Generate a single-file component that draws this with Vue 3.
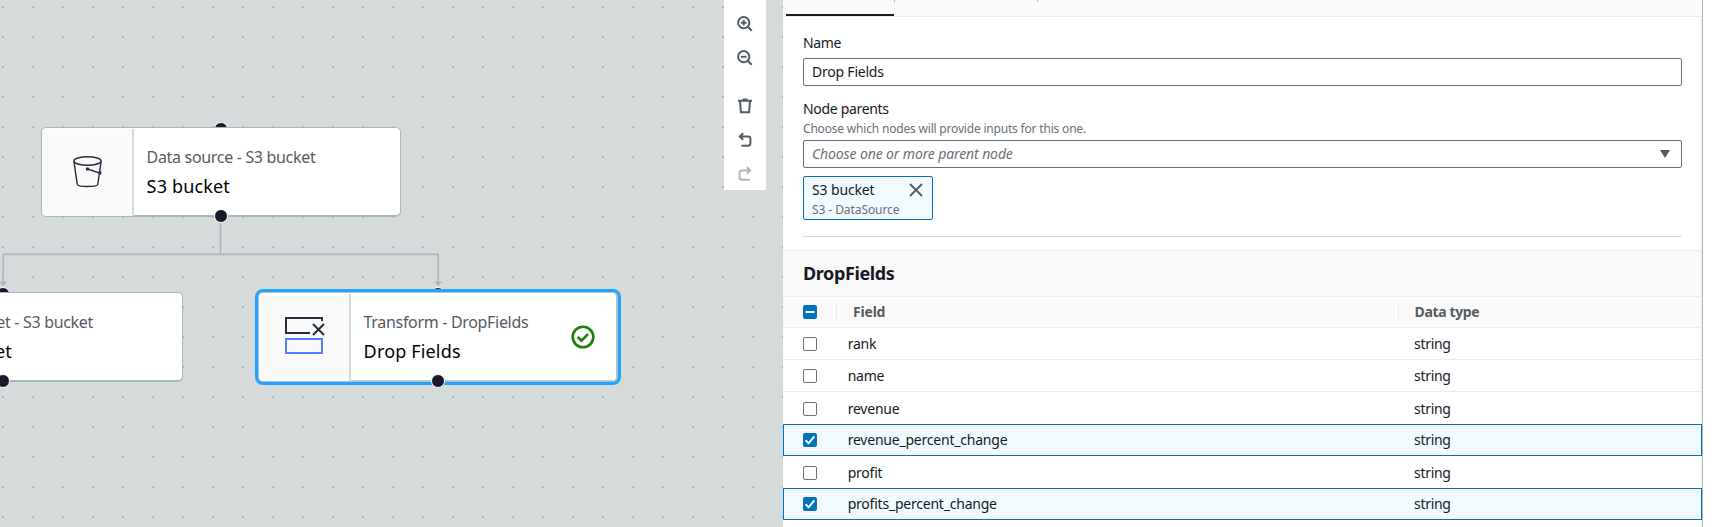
<script setup>
const nodes = [
  { id: 'source', kind: 'Data source - S3 bucket', title: 'S3 bucket', icon: 'bucket' },
  { id: 'target', kind: 'Data target - S3 bucket', title: 'S3 bucket', icon: 'bucket' },
  { id: 'drop', kind: 'Transform - DropFields', title: 'Drop Fields', icon: 'drop', selected: true },
]
const fields = [
  { name: 'rank', type: 'string' },
  { name: 'name', type: 'string' },
  { name: 'revenue', type: 'string', low: true },
  { name: 'revenue_percent_change', type: 'string', checked: true },
  { name: 'profit', type: 'string', low: true },
  { name: 'profits_percent_change', type: 'string', checked: true },
]
</script>

<template>
  <div class="app">
    <section class="canvas">
      <svg class="edges" width="783" height="527" fill="none" stroke="#b1b1b7" stroke-width="1.6">
        <path d="M220.5 215V254.4H3.2V283M220.5 254.4H438.2V283" />
        <path d="M-.6 281.5h7.6l-3.8 4.8zM434.4 281.5h7.6l-3.8 4.8z" fill="#b1b1b7" stroke="none" />
      </svg>

      <div v-for="n in nodes" :key="n.id" class="node-wrap" :class="n.id">
        <i class="handle top"></i>
        <div class="node" :class="{ selected: n.selected }">
          <div class="node-icon">
            <svg v-if="n.icon === 'bucket'" width="32" height="34" viewBox="0 0 32 34" fill="none" stroke="#232f3e" stroke-width="1.4">
              <ellipse cx="15.5" cy="6" rx="13.6" ry="4.2" />
              <path d="M1.9 6.2l3.3 23c.3 3 20.3 3 20.6 0l3.3-23" />
              <path d="M15.5 14l13.8 4.6M26.8 16.8l2.6.2M26.6 18.4l2.6.6" />
              <circle cx="15.5" cy="14" r="1" fill="#232f3e" />
            </svg>
            <svg v-else width="42" height="40" viewBox="0 0 42 40" fill="none" stroke-width="2">
              <path d="M38 5V2H2v15h24" stroke="#232f3e" />
              <path d="M29 8l11 11M40 8L29 19" stroke="#232f3e" />
              <path d="M2 23h36v14H2z" stroke="#527fff" />
            </svg>
          </div>
          <div class="node-text">
            <div class="kind">{{ n.kind }}</div>
            <div class="title">{{ n.title }}</div>
          </div>
          <svg v-if="n.selected" class="ok" width="24" height="24" viewBox="0 0 24 24" fill="none" stroke="#1d8102" stroke-width="2.6">
            <circle cx="12" cy="12" r="10.3" />
            <path d="M6.6 12l3.9 3.7 6.4-6.6" />
          </svg>
        </div>
        <i class="handle bottom"></i>
      </div>

      <div class="toolbar">
        <svg width="16" height="16" viewBox="0 0 16 16"><circle cx="6.7" cy="6.7" r="5.6" /><path d="M10.8 10.8l4 4M6.7 3.8v5.8M3.8 6.7h5.8" /></svg>
        <svg width="16" height="16" viewBox="0 0 16 16"><circle cx="6.7" cy="6.7" r="5.6" /><path d="M10.8 10.8l4 4M3.8 6.7h5.8" /></svg>
        <svg class="gap" width="16" height="16" viewBox="0 0 16 16"><path d="M1 2.7h14M5.5 1.6h5M3 3l.9 11.3h8.2L13 3" /></svg>
        <svg width="16" height="16" viewBox="0 0 16 16"><path d="M3 4.5h8a2.4 2.4 0 0 1 2.4 2.4v4.4a2.4 2.4 0 0 1-2.4 2.4H4.4M6.2 1.2L2.8 4.5l3.4 3.3" /></svg>
        <svg class="off" width="16" height="16" viewBox="0 0 16 16"><path d="M13 4.5H5a2.4 2.4 0 0 0-2.4 2.4v4.4A2.4 2.4 0 0 0 5 13.7h7.8M9.8 1.2l3.4 3.3-3.4 3.3" /></svg>
      </div>
    </section>

    <aside class="panel">
      <div class="tabs"><span class="tab active"></span><span class="tab second"></span></div>
      <form class="form" @submit.prevent>
        <label class="label">Name</label>
        <div class="field">Drop Fields</div>
        <label class="label parents">Node parents</label>
        <div class="hint">Choose which nodes will provide inputs for this one.</div>
        <div class="field select">
          <em>Choose one or more parent node</em>
          <svg width="10" height="8" viewBox="0 0 10 8"><path d="M0 0h10L5 8z" fill="#545b64" /></svg>
        </div>
        <div class="token">
          <div>
            <div class="token-name">S3 bucket</div>
            <div class="token-sub">S3 - DataSource</div>
          </div>
          <svg width="14" height="14" viewBox="0 0 14 14" stroke="#545b64" stroke-width="1.8"><path d="M1 1l12 12M13 1L1 13" /></svg>
        </div>
        <div class="rule"></div>
      </form>

      <h2 class="heading">DropFields</h2>
      <div class="row head">
        <span class="box on"><svg width="14" height="14" stroke="#fff" stroke-width="2"><path d="M2.5 7h9" /></svg></span>
        <span class="cell name">Field</span>
        <span class="cell type">Data type</span>
      </div>
      <div v-for="f in fields" :key="f.name" class="row" :class="{ checked: f.checked, low: f.low }">
        <span class="box" :class="{ on: f.checked }">
          <svg v-if="f.checked" width="14" height="14" fill="none" stroke="#fff" stroke-width="2"><path d="M2.5 7.3l3.1 3L11.3 3.4" /></svg>
        </span>
        <span class="cell name">{{ f.name }}</span>
        <span class="cell type">{{ f.type }}</span>
      </div>
    </aside>
  </div>
</template>

<style>
body { margin: 0; overflow: hidden; background: #fff; }
</style>

<style scoped>
.app {
  display: flex;
  width: 1716px;
  height: 527px;
  overflow: hidden;
  font: 14px/20px "Noto Sans", "Open Sans", sans-serif;
  letter-spacing: -0.22px;
  color: #16191f;
}
.app * { box-sizing: border-box; }

/* Graph canvas */
.canvas {
  position: relative;
  width: 783px;
  flex: none;
  overflow: hidden;
  background: #d5dbdb radial-gradient(circle at 3px 7px, #b0b7b9 0.9px, transparent 1.4px) 0 0 / 30px 30px;
}
.edges { position: absolute; left: 0; top: 0; }
.node-wrap { position: absolute; width: 360px; height: 90px; }
.source { left: 41px; top: 127px; }
.target { left: -177px; top: 292px; }
.drop { left: 258px; top: 292px; }
.node {
  position: relative;
  display: flex;
  height: 90px;
  background: #fff;
  border: 1px solid #aab7b8;
  border-radius: 5px;
  box-shadow: inset 0 -1px 0 #aab7b8;
}
.node.selected { box-shadow: 0 0 0 3px #24a4ff, inset 0 -1px 0 #c3cbcc; border-color: #b5bec0; border-right-width: 2px; }
.node-icon {
  display: flex;
  align-items: center;
  justify-content: center;
  width: 92px;
  flex: none;
  margin-top: 1px;
  background: #fafafa;
  border-right: 2px solid #d5dbdb;
  border-radius: 4px 0 0 4px;
}
.node-icon svg { margin: -2px 0 0 2px; }
.drop .node-icon svg { margin: -3px 0 0 1px; }
.node-text { padding: 17px 0 0 12.6px; white-space: nowrap; }
.kind { font-size: 16px; line-height: 24px; letter-spacing: -0.32px; color: #545b64; }
.title { margin-top: 5px; font-size: 18px; line-height: 24px; letter-spacing: 0.16px; color: #000; }
.ok { position: absolute; left: 311.5px; top: 32px; }
.handle {
  position: absolute;
  left: 172.5px;
  width: 14px;
  height: 14px;
  border: 1px solid #fff;
  border-radius: 50%;
  background: #1a192b;
}
.handle.top { top: -5.5px; }
.handle.bottom { bottom: -5.5px; }
.drop .handle, .target .handle { left: 173.3px; }

.toolbar {
  position: absolute;
  left: 724px;
  top: 0;
  display: flex;
  flex-direction: column;
  align-items: center;
  gap: 18px;
  width: 42px;
  height: 190px;
  padding-top: 16px;
  background: #fff;
}
.toolbar svg { flex: none; fill: none; stroke: #545b64; stroke-width: 2; }
.toolbar .gap { margin-top: 14px; }
.toolbar .off { stroke: #aab7b8; }

/* Properties panel */
.panel {
  width: 920px;
  flex: none;
  background: #fff;
  border-right: 1px solid #aab7b8;
  box-shadow: inset -1px 0 0 #eaeded;
}
.tabs { display: flex; height: 17px; padding-left: 3px; background: #fafafa; border-bottom: 1px solid #eaeded; }
.tab { background: linear-gradient(#aab7b8, #aab7b8) right top / 1px 2px no-repeat; }
.tab.active { width: 109px; height: 16px; }
.tab.active::after { content: ""; display: block; width: 108px; height: 2px; margin-top: 14px; background: #16191f; }
.tab.second { width: 143px; }
.form { padding: 16px 20px 0; height: 233px; }
.label { display: block; height: 20px; line-height: 20px; letter-spacing: -0.32px; }
.form .label:first-child { height: 25px; }
.field {
  display: flex;
  align-items: center;
  justify-content: space-between;
  width: 879px;
  height: 28px;
  padding: 0 11px 0 8px;
  border: 1px solid #687078;
  border-radius: 2px;
}
.label.parents { margin-top: 13px; }
.hint { height: 21px; font-size: 12px; line-height: 19px; letter-spacing: -0.19px; color: #687078; }
.select em { color: #687078; letter-spacing: -0.12px; }
.token {
  display: flex;
  justify-content: space-between;
  width: 130px;
  height: 44px;
  margin-top: 8px;
  padding: 3px 9px 0 8px;
  background: #f1faff;
  border: 1px solid #0073bb;
  border-radius: 2px;
}
.token svg { margin-top: 3px; }
.token-name { letter-spacing: -0.14px; }
.token-sub { font-size: 12px; line-height: 20px; letter-spacing: -0.08px; white-space: nowrap; color: #687078; }
.rule { width: 879px; margin-top: 16px; border-top: 1px solid #d5dbdb; }

.heading {
  height: 46px;
  margin: 0 1px 0 0;
  padding: 0 20px;
  background: #fafafa;
  border-top: 1px solid #eaeded;
  font-size: 18px;
  line-height: 44px;
  letter-spacing: -0.38px;
}
.row {
  display: flex;
  align-items: center;
  height: 32px;
  margin-right: 1px;
  padding-left: 20px;
  border-bottom: 1px solid #eaeded;
  line-height: 20px;
}
.row.low { border-bottom: 0; padding-top: 1px; }
.box { width: 14px; height: 14px; flex: none; border: 1px solid #687078; border-radius: 2px; background: #fff; }
.box.on { border: 0; background: #0073bb; }
.box svg { display: block; }
.cell.name { width: 597px; padding-left: 30.7px; }
.cell.type { letter-spacing: -0.3px; }
.row.checked { margin-right: 0; padding-left: 19px; background: #f1faff; border: 1px solid #0073bb; }
.head { background: #fafafa; border-top: 1px solid #eaeded; color: #545b64; font-weight: 700; }
.head .cell { height: 20px; border-left: 1px solid #eaeded; }
.head .name { width: 562px; margin-left: 19px; padding-left: 16px; letter-spacing: -0.2px; }
.head .type { padding-left: 15.5px; letter-spacing: -0.36px; }
</style>
